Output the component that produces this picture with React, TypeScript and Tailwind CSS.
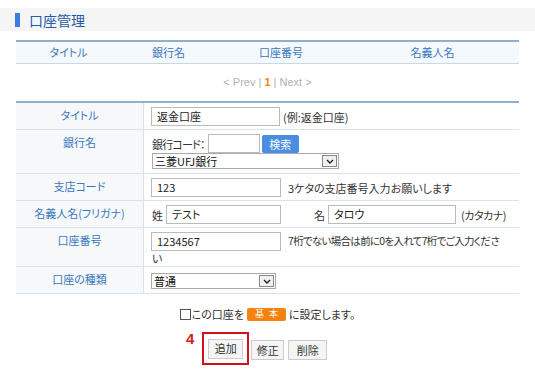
const jp = { fontFamily: '"Noto Sans CJK JP", "Liberation Sans", sans-serif' };

function Row({ label, children, h }: { label: string; children: React.ReactNode; h: string }) {
  return (
    <div className={`flex border-b border-[#d6e3ee] ${h}`}>
      <div className="w-[127px] shrink-0 bg-[#f6f8fa] pt-[5px] text-center text-[11px] leading-[14px] text-[#3a78bd]">{label}</div>
      <div className="flex-1 border-l border-[#d6e3ee] pl-[7px] pt-[4px] text-[11px] leading-[14px] text-[#333]">{children}</div>
    </div>
  );
}

function Field({ w, value }: { w: string; value?: string }) {
  return (
    <div className={`${w} h-[19px] border border-[#bbb] bg-white px-[5px] text-[11px] leading-[17px] text-[#222]`}>{value}</div>
  );
}

function Select({ w, value }: { w: string; value: string }) {
  return (
    <div className={`${w} flex h-[16px] items-center justify-between border border-[#aaa] bg-white pl-[2px] text-[11px] text-[#111]`}>
      <span className="leading-[14px]">{value}</span>
      <span className="mr-[1px] flex h-[12px] w-[15px] items-center justify-center border border-[#888] bg-[#f0f0f0]">
        <svg width="8" height="5" viewBox="0 0 8 5"><path d="M1 1 L4 4 L7 1" stroke="#222" strokeWidth="1.4" fill="none" /></svg>
      </span>
    </div>
  );
}

export default function App() {
  return (
    <div className="h-[369px] w-[535px] bg-white pt-[8px] [font-feature-settings:'palt']" style={jp}>
      <div className="flex h-[23px] items-center bg-[#f5f5f5] pl-[15px]">
        <div className="h-[14px] w-[5px] bg-[#3b7de0]" />
        <div className="ml-[9px] text-[14px] leading-none text-[#255ba8]">口座管理</div>
      </div>

      <div className="mx-[16px] mt-[9px] border-t-2 border-[#8db0cd]">
        <div className="grid h-[22px] grid-cols-[105px_95px_130px_1fr] items-center border-b border-[#c6d9e8] bg-[#f6f9fb] text-center text-[11px] text-[#3a78bd]">
          <div>タイトル</div>
          <div>銀行名</div>
          <div>口座番号</div>
          <div>名義人名</div>
        </div>
      </div>

      <div className="mt-[11px] text-center text-[11px] leading-[14px] text-[#b0b0b0]" style={{ fontFamily: '"Liberation Sans", sans-serif' }}>
        &lt; Prev | <span className="font-bold text-[#f08a10]">1</span> | Next &gt;
      </div>

      <div className="mx-[16px] mt-[12px] border-t-2 border-[#8db0cd]">
        <Row label="タイトル" h="h-[27px]">
          <div className="flex items-center gap-[3px]">
            <Field w="w-[129px]" value="返金口座" />
            <span>(例:返金口座)</span>
          </div>
        </Row>
        <Row label="銀行名" h="h-[44px]">
          <div className="flex items-center">
            <span className="shrink-0 whitespace-nowrap pl-[1px] pr-[3px] tracking-[-0.8px]">銀行コード：</span>
            <Field w="w-[52px]" />
            <button className="ml-[2px] h-[18px] w-[37px] rounded-[2px] bg-[#4a8de3] text-[11px] text-white">検索</button>
          </div>
          <Select w="w-[187px] ml-[1px]" value="三菱UFJ銀行" />
        </Row>
        <Row label="支店コード" h="h-[27px]">
          <div className="flex items-center gap-[7px]">
            <Field w="w-[130px]" value="123" />
            <span>3ケタの支店番号入力お願いします</span>
          </div>
        </Row>
        <Row label="名義人名(フリガナ)" h="h-[27px]">
          <div className="flex items-center">
            <span className="pl-[1px]">姓</span>
            <Field w="w-[115px] ml-[3px]" value="テスト" />
            <span className="ml-[33px]">名</span>
            <Field w="w-[128px] ml-[3px]" value="タロウ" />
            <span className="ml-[5px] tracking-[-0.5px]">(カタカナ)</span>
          </div>
        </Row>
        <Row label="口座番号" h="h-[39px]">
          <div className="flex items-start gap-[7px]">
            <Field w="w-[130px] shrink-0" value="1234567" />
            <span className="whitespace-nowrap text-[10.5px] leading-[18px] tracking-[-0.7px]">7桁でない場合は前に0を入れて7桁でご入力くださ</span>
          </div>
          <div className="pl-[1px] leading-[14px]">い</div>
        </Row>
        <Row label="口座の種類" h="h-[27px]">
          <div className="pt-[2px]">
            <Select w="w-[125px]" value="普通" />
          </div>
        </Row>
      </div>

      <div className="mt-[13px] flex items-center justify-center text-[11px] leading-[14px] text-[#333]">
        <span className="mr-[1px] h-[11px] w-[11px] border border-[#555] bg-white" />
        <span>この口座を</span>
        <span className="mx-[3px] flex h-[13px] w-[39px] items-center justify-center gap-[5px] rounded-[2px] bg-[#f5820f] text-[9px] text-white">
          <span>基</span><span>本</span>
        </span>
        <span>に設定します。</span>
      </div>

      <div className="mt-[11px] flex items-start pl-[186px]">
        <span className="mt-[-1px] text-[15px] font-bold leading-none text-[#d0211c]" style={{ fontFamily: '"Liberation Sans", sans-serif' }}>4</span>
        <div className="ml-[8px] flex h-[33px] w-[47px] items-center justify-center border-2 border-[#d0121c]">
          <button className="h-[20px] w-[35px] border border-[#ccc] bg-[#f5f5f5] text-[11px] text-[#333]">追加</button>
        </div>
        <div className="ml-[2px] mt-[8px] flex gap-[4px]">
          <button className="h-[20px] w-[33px] border border-[#ccc] bg-[#f5f5f5] text-[11px] text-[#333]">修正</button>
          <button className="h-[20px] w-[39px] border border-[#ccc] bg-[#f5f5f5] text-[11px] text-[#333]">削除</button>
        </div>
      </div>
    </div>
  );
}
